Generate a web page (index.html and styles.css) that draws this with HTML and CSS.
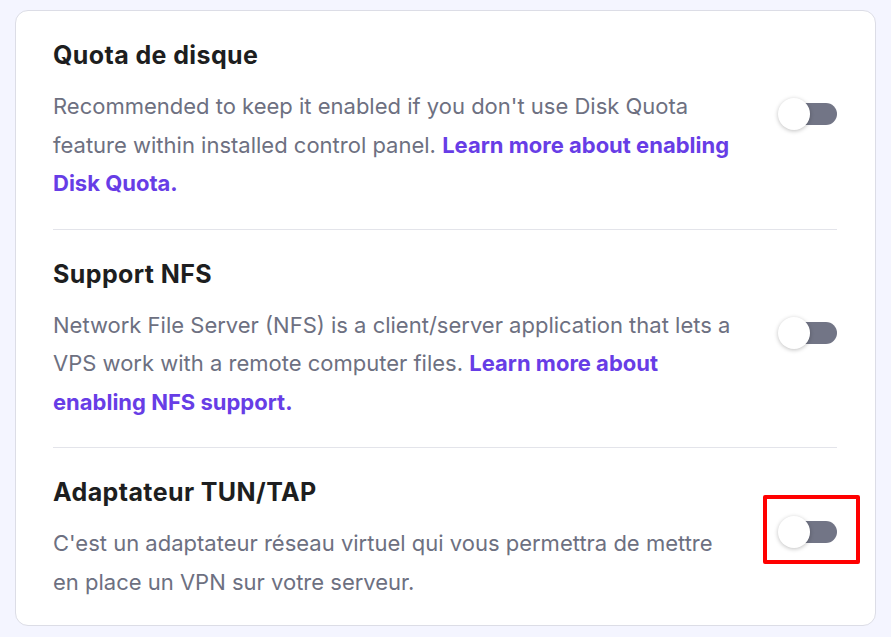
FILE: index.html
```html
<!DOCTYPE html>
<html lang="fr">
<head>
<meta charset="utf-8">
<link rel="stylesheet" href="styles.css">
</head>
<body>
<div class="card">
  <div class="row">
    <div class="text">
      <h2 class="title">Quota de disque</h2>
      <p class="desc">Recommended to keep it enabled if you don't use Disk Quota feature within installed control panel. <a class="link" href="#">Learn more about enabling Disk Quota.</a></p>
    </div>
    <div class="toggle"><span class="track"></span><span class="knob"></span></div>
  </div>
  <div class="row">
    <div class="text">
      <h2 class="title">Support NFS</h2>
      <p class="desc">Network File Server (NFS) is a client/server application that lets a VPS work with a remote computer files. <a class="link" href="#">Learn more about enabling NFS support.</a></p>
    </div>
    <div class="toggle"><span class="track"></span><span class="knob"></span></div>
  </div>
  <div class="row">
    <div class="text">
      <h2 class="title">Adaptateur TUN/TAP</h2>
      <p class="desc">C'est un adaptateur réseau virtuel qui vous permettra de mettre en place un VPN sur votre serveur.</p>
    </div>
    <div class="toggle highlighted"><span class="track"></span><span class="knob"></span><span class="mark"></span></div>
  </div>
</div>
</body>
</html>
```
FILE: styles.css
```css
html, body {
  margin: 0;
  padding: 0;
}
body {
  background: #f4f5ff;
  font-family: Inter, "Noto Sans", sans-serif;
  width: 891px;
  height: 637px;
  overflow: hidden;
  padding: 10px 15px 0 15px;
  box-sizing: border-box;
}
.card {
  background: #fff;
  border: 1px solid #dcdde6;
  border-radius: 13px;
  padding: 0 38px 0 37px;
  height: 616px;
  box-sizing: border-box;
}
.row {
  display: flex;
  align-items: center;
  justify-content: space-between;
  padding: 25px 0 26px;
  border-bottom: 1px solid #e3e4ea;
}
.row:last-child {
  border-bottom: none;
}
.text {
  width: 684px;
}
.title {
  margin: 0 0 13px;
  font-size: 25px;
  letter-spacing: 0.4px;
  line-height: 38px;
  font-weight: 700;
  color: #1d1e20;
}
.desc {
  margin: 0;
  font-size: 22px;
  line-height: 38.5px;
  color: #6d7081;
}
.link {
  color: #673de6;
  font-weight: 700;
  text-decoration: none;
}
.toggle {
  position: relative;
  width: 59px;
  height: 32px;
  margin-bottom: 10px;
  flex: none;
}
.track {
  position: absolute;
  right: 0;
  top: 5px;
  width: 57px;
  height: 22px;
  border-radius: 11px;
  background: #727586;
}
.knob {
  position: absolute;
  left: 0;
  top: 0;
  width: 32px;
  height: 32px;
  border-radius: 50%;
  background: #fff;
  box-shadow: 0 1px 4px rgba(0, 0, 0, 0.25);
}
.mark {
  position: absolute;
  left: -15px;
  top: -21px;
  width: 89px;
  height: 61px;
  border: 4px solid #ff0000;
  border-radius: 2px;
}
```
